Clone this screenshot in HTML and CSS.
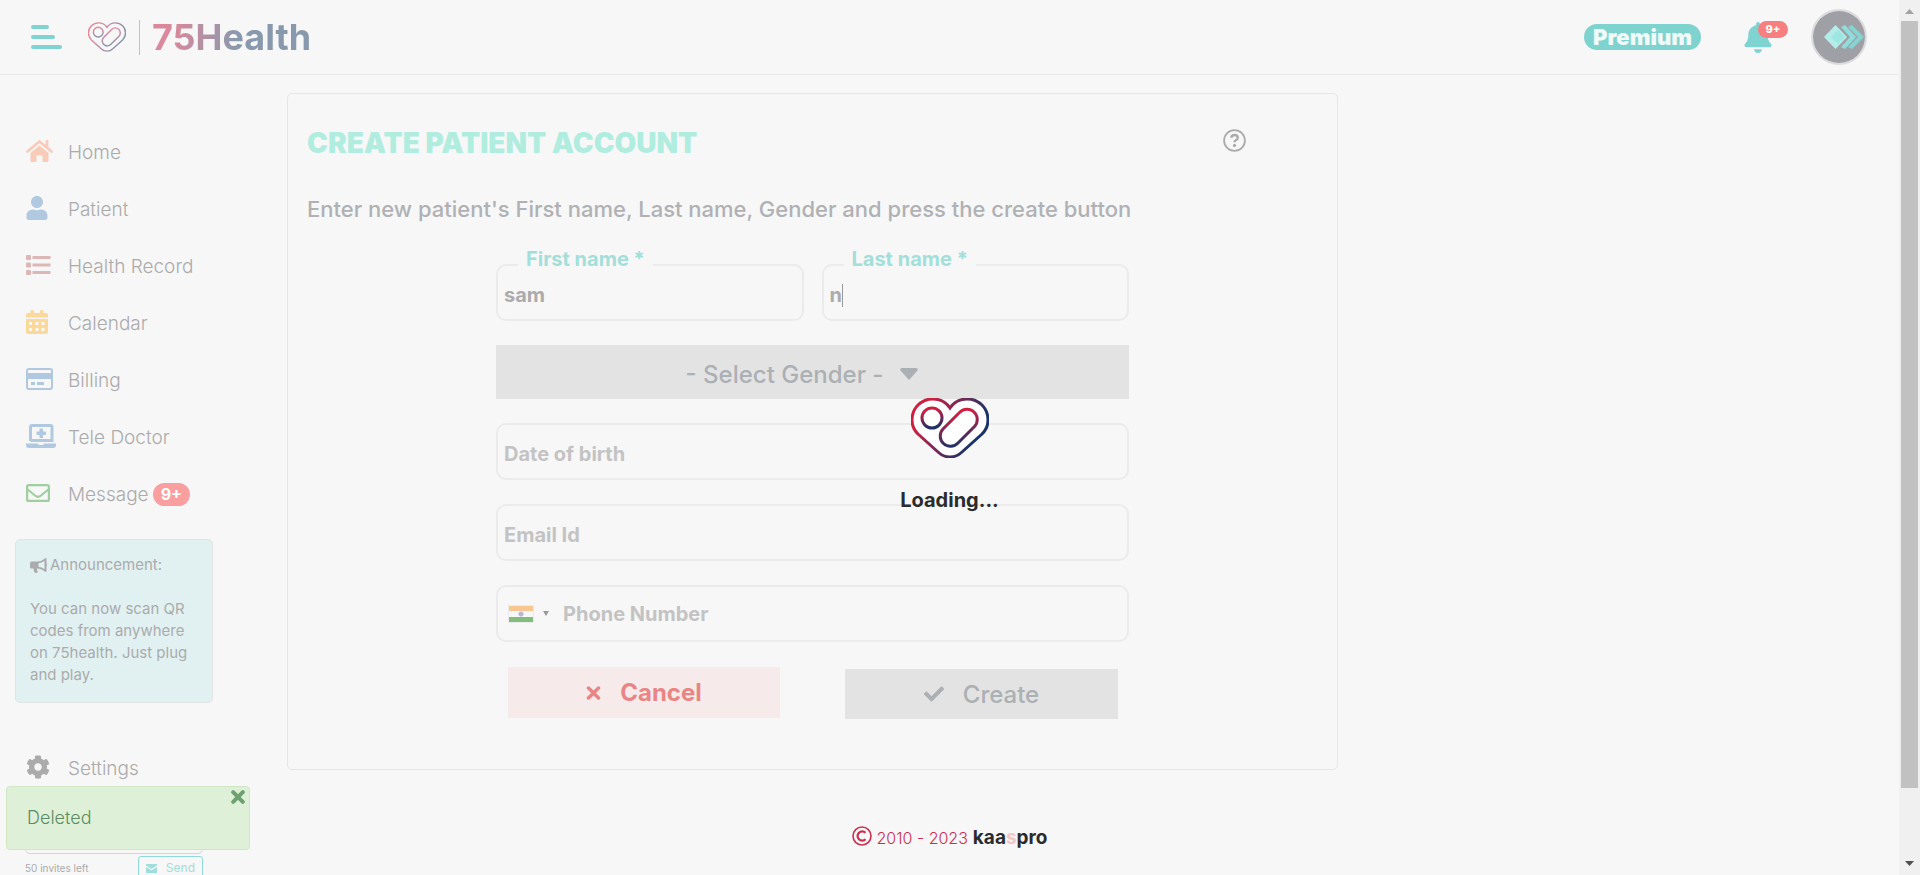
FILE: index.html
```html
<!DOCTYPE html>
<html lang="en">
<head>
<meta charset="utf-8">
<title>75Health - Create Patient Account</title>
<link rel="stylesheet" href="styles.css">
</head>
<body>
<svg class="defs" aria-hidden="true">
  <defs>
    <linearGradient id="g-heart" x1="0" y1="0.3" x2="1" y2="0.7"><stop offset="0.1" stop-color="#cf1f40"/><stop offset="0.85" stop-color="#17336a"/></linearGradient>
    <linearGradient id="g-drop" x1="0.4" y1="0" x2="0.6" y2="1"><stop offset="0.1" stop-color="#cf1f40"/><stop offset="1" stop-color="#17336a"/></linearGradient>
    <symbol id="heart" viewBox="0 0 78 60">
      <path d="M39 10C35 4 29 1 22 1C10 1 1 10 1 22C1 27 3 32 7 36L27 54Q32 59 39 59Q46 59 51 54L71 36C75 32 77 27 77 22C77 10 68 1 56 1C49 1 43 4 39 10Z" stroke="url(#g-heart)"/>
      <circle cx="21" cy="20" r="10" stroke="url(#g-drop)"/>
      <path d="M48.500 14.500A10 10 0 0 1 63.500 28.500L47 45A10 10 0 0 1 32 31Z" stroke="url(#g-drop)"/>
    </symbol>
  </defs>
</svg>
<div class="window">
  <div class="page">
    <header class="topbar">
      <button class="menu" aria-label="Menu"><span></span><span></span><span></span></button>
      <a class="brand" href="#"><svg class="brand-mark"><use href="#heart"/></svg><span class="brand-name">75Health</span></a>
      <a class="premium" href="#">Premium</a>
      <button class="bell" aria-label="Notifications">
        <svg viewBox="0 0 448 512"><path d="M224 512c35.320 0 63.970-28.650 63.970-64H160.030c0 35.350 28.650 64 63.970 64zm215.390-149.710c-19.320-20.760-55.470-51.990-55.470-154.290 0-77.700-54.480-139.900-127.940-155.160V32c0-17.670-14.320-32-31.980-32s-31.980 14.330-31.980 32v20.840C118.560 68.100 64.080 130.300 64.080 208c0 102.300-36.150 133.530-55.470 154.290-6 6.450-8.660 14.160-8.610 21.710.11 16.400 12.980 32 32.100 32h383.800c19.120 0 32-15.600 32.100-32 .05-7.550-2.610-15.270-8.610-21.710z"/></svg>
        <span class="bell-count">9+</span>
      </button>
      <button class="avatar" aria-label="Account">
        <svg viewBox="0 0 52 52"><circle cx="26" cy="26" r="26" fill="#9fa0a5"/><g fill="#86d3d1"><path d="M35 16 39 14 51 26 39 38 35 36 45 26Z"/><path d="M28 16 32 14 43 26 32 38 28 36 37 26Z" fill="#8fdcda"/></g><path d="M22.500 14 34 26 22.500 38 11 26Z" fill="#b4ece9"/><path d="M25 19 32 26 25 33 18 26Z" fill="#9ee6e2"/></svg>
      </button>
    </header>

    <nav class="sidebar">
      <ul class="nav">
        <li><a href="#"><svg class="home" width="27" height="22" viewBox="0 0 27 22"><path d="M1.500 11.500 13.500 1.500 25.500 11.500M21 1V7" fill="none" stroke="currentColor" stroke-width="2.800" stroke-linecap="round" stroke-linejoin="round"/><path d="M13.500 5.500 22.500 13V21Q22.500 22 21.500 22H16.500V15.500H10.500V22H5.500Q4.500 22 4.500 21V13Z" fill="currentColor"/></svg>Home</a></li>
        <li><a href="#"><svg class="blue" width="22" height="24" viewBox="0 0 448 512"><path fill="currentColor" d="M224 256c70.700 0 128-57.300 128-128S294.700 0 224 0 96 57.300 96 128s57.300 128 128 128zm89.600 32h-16.700c-22.200 10.200-46.900 16-72.900 16s-50.600-5.800-72.900-16h-16.700C60.200 288 0 348.200 0 422.400V464c0 26.500 21.500 48 48 48h352c26.500 0 48-21.500 48-48v-41.600c0-74.200-60.200-134.400-134.400-134.400z"/></svg>Patient</a></li>
        <li><a href="#"><svg class="record" width="25" height="20" viewBox="0 0 25 20"><g fill="currentColor"><rect width="5" height="5" rx="1"/><rect y="7.500" width="5" height="5" rx="1"/><rect y="15" width="5" height="5" rx="1"/><rect x="6.500" y="1" width="18" height="3"/><rect x="6.500" y="8.500" width="18" height="3"/><rect x="6.500" y="16" width="18" height="3"/></g></svg>Health Record</a></li>
        <li><a href="#"><svg class="calendar" width="22" height="24" viewBox="0 0 22 24"><path fill="currentColor" fill-rule="evenodd" d="M4.500 3V1q0-1 1-1h1.500q1 0 1 1v2h6V1q0-1 1-1h1.500q1 0 1 1v2H20q2 0 2 2v2.500H0V5q0-2 2-2zM0 9h22v13q0 2-2 2H2q-2 0-2-2zM3 12v3h3v-3zM9.500 12v3h3v-3zM15.500 12v3h3v-3zM3 18v3h3v-3zM9.500 18v3h3v-3zM15.500 18v3h3v-3z"/></svg>Calendar</a></li>
        <li><a href="#"><svg class="blue" width="27" height="22" viewBox="0 0 27 22"><rect x="1" y="1" width="25" height="20" rx="2" fill="none" stroke="currentColor" stroke-width="2"/><path fill="currentColor" d="M1 5h25v6H1zM5 14h4v3H5zM11 14h7v3h-7z"/></svg>Billing</a></li>
        <li><a href="#"><svg class="blue" width="30" height="24" viewBox="0 0 30 24"><path d="M4.500 17V3q0-1.500 1.500-1.500H24.500q1.500 0 1.500 1.500V16.500H4.500" fill="none" stroke="currentColor" stroke-width="3"/><path fill="currentColor" d="M13.500 4.500h3.500v3h3v3.500h-3v3h-3.500v-3h-3V7.500h3zM0 19.500h12q.5 1.500 1.500 1.500h3q1 0 1.500-1.500H30V21q0 3-3 3H3q-3 0-3-3z"/></svg>Tele Doctor</a></li>
        <li><a href="#"><svg class="message" width="24" height="18" viewBox="0 0 24 18"><g fill="none" stroke="currentColor" stroke-width="2.200"><rect x="1.100" y="1.100" width="21.800" height="15.800" rx="1.500"/><path d="M1 5 9 11.500Q12 14 15 11.500L23 5"/></g></svg>Message<span class="count">9+</span></a></li>
      </ul>
      <section class="announcement">
        <h2><svg width="17" height="15" viewBox="0 0 17 15"><path fill="currentColor" fill-rule="evenodd" d="M15.500 0q1 0 1 1v4.500q1 1 0 2.500v5q0 1-1 1-4-3.500-8.500-3.500 0 2.500 1 3.500-.5 1-3 1-1.500-1.500-1.500-4.500H1.500Q0 10.500 0 9V5q0-1.500 1.500-1.500H7Q11.500 3.500 15.500 0zM14.500 3Q11.500 5 8.500 5.300V8.700q3 .3 6 2.300z"/></svg>Announcement:</h2>
        <p>You can now scan QR codes from anywhere on 75health. Just plug and play.</p>
      </section>
      <ul class="nav">
        <li><a href="#"><svg class="gear" width="24" height="24" viewBox="0 0 512 512"><path fill="currentColor" d="M487.400 315.700l-42.600-24.600c4.300-23.200 4.300-47 0-70.200l42.600-24.600c4.900-2.800 7.100-8.600 5.500-14-11.100-35.600-30-67.800-54.700-94.600-3.800-4.100-10-5.100-14.800-2.300L380.800 110c-17.900-15.400-38.500-27.300-60.800-35.100V25.800c0-5.600-3.900-10.500-9.400-11.700-36.700-8.200-74.300-7.800-109.200 0-5.500 1.200-9.400 6.100-9.400 11.700V75c-22.200 7.900-42.800 19.800-60.800 35.100L88.700 85.500c-4.900-2.800-11-1.900-14.800 2.300-24.700 26.700-43.600 58.900-54.700 94.600-1.700 5.400.6 11.200 5.500 14L67.300 221c-4.300 23.200-4.300 47 0 70.200l-42.600 24.600c-4.900 2.800-7.100 8.600-5.500 14 11.100 35.600 30 67.800 54.700 94.600 3.800 4.100 10 5.100 14.800 2.300l42.600-24.600c17.900 15.400 38.500 27.300 60.800 35.100v49.200c0 5.600 3.900 10.500 9.400 11.700 36.700 8.200 74.300 7.800 109.200 0 5.500-1.200 9.400-6.100 9.400-11.700v-49.200c22.200-7.900 42.800-19.800 60.800-35.100l42.600 24.600c4.900 2.800 11 1.900 14.800-2.300 24.700-26.700 43.600-58.900 54.700-94.600 1.500-5.500-.7-11.300-5.600-14.100zM256 336c-44.100 0-80-35.900-80-80s35.900-80 80-80 80 35.900 80 80-35.900 80-80 80z"/></svg>Settings</a></li>
      </ul>
      <form class="invite">
        <input type="email" aria-label="Invite email">
        <div class="invite-row">
          <span>50 invites left</span>
          <button type="button"><svg width="11" height="9" viewBox="0 0 11 9"><path fill="currentColor" d="M0 0H11V1.500L5.500 5 0 1.500ZM0 3 5.500 6.300 11 3V9H0Z"/></svg>Send</button>
        </div>
      </form>
    </nav>

    <main class="card">
      <div class="card-head">
        <h1>CREATE PATIENT ACCOUNT</h1>
        <button class="help" aria-label="Help"><svg viewBox="0 0 23 23"><circle cx="11.500" cy="11.500" r="10.400" fill="none" stroke="currentColor" stroke-width="1.800"/><path d="M8.300 8.800Q8.500 6 11.500 6Q14.800 6 14.800 8.700Q14.800 10.400 12.800 11.200Q11.500 11.800 11.500 13.300" fill="none" stroke="currentColor" stroke-width="2.300"/><circle cx="11.500" cy="16.400" r="1.600" fill="currentColor"/></svg></button>
      </div>
      <p class="intro">Enter new patient's First name, Last name, Gender and press the create button</p>
      <form class="form">
        <div class="names">
          <div class="field"><label for="first">First name *</label><input id="first" type="text" value="sam"></div>
          <div class="field"><label for="last">Last name *</label><input id="last" type="text" value="n"><span class="caret"></span></div>
        </div>
        <div class="gender">
          <select aria-label="Gender"><option>- Select Gender -</option></select>
          <svg viewBox="0 0 18 12"><path fill="currentColor" d="M1.500 0H16.500Q18.500 1 17.500 2.500L10 11Q9 12 8 11L.5 2.500Q-.5 1 1.500 0Z"/></svg>
        </div>
        <input type="text" placeholder="Date of birth" aria-label="Date of birth">
        <input type="email" placeholder="Email Id" aria-label="Email Id">
        <div class="phone">
          <button type="button" class="country" aria-label="India"><span class="flag"></span><svg width="6" height="5" viewBox="0 0 6 5"><path fill="currentColor" d="M0 0H6L3 5Z"/></svg></button>
          <input type="tel" placeholder="Phone Number" aria-label="Phone Number">
        </div>
        <div class="actions">
          <button type="button" class="cancel"><svg width="15" height="14" viewBox="0 0 15 14"><path d="M2.500 2 12.500 12M12.500 2 2.500 12" stroke="currentColor" stroke-width="3.500" stroke-linecap="round"/></svg>Cancel</button>
          <button type="button" class="create"><svg width="20" height="20" viewBox="0 0 512 512"><path fill="currentColor" d="M173.898 439.404l-166.400-166.400c-9.997-9.997-9.997-26.206 0-36.204l36.203-36.204c9.997-9.998 26.207-9.998 36.204 0L192 312.690 432.095 72.596c9.997-9.997 26.207-9.997 36.204 0l36.203 36.204c9.997 9.997 9.997 26.206 0 36.204l-294.400 294.401c-9.998 9.997-26.207 9.997-36.204-.001z"/></svg>Create</button>
        </div>
      </form>
    </main>

    <footer class="footer"><svg width="20" height="20" viewBox="0 0 20 20"><g fill="none" stroke="currentColor" stroke-width="1.600"><circle cx="10" cy="10" r="9"/><path d="M13.500 6.800A4.600 4.600 0 1 0 13.500 13.200" stroke-width="2.200"/></g></svg><span>2010 - 2023</span><a href="#">kaa<i>s</i>pro</a></footer>

    <div class="loading" role="status"><svg><use href="#heart"/></svg><p>Loading...</p></div>
    <div class="toast" role="alert">Deleted<button aria-label="Close"><svg width="14" height="14" viewBox="0 0 14 14"><path d="M2.200 2.200 11.800 11.800M11.800 2.200 2.200 11.800" stroke="currentColor" stroke-width="4" stroke-linecap="round"/></svg></button></div>
  </div>
  <div class="scrollbar" aria-hidden="true">
    <svg class="up" width="9" height="5" viewBox="0 0 9 5"><path d="M4.500 0 9 5H0Z"/></svg>
    <div class="thumb"></div>
    <svg width="9" height="5" viewBox="0 0 9 5"><path d="M0 0H9L4.500 5Z"/></svg>
  </div>
</div>
</body>
</html>
```
FILE: styles.css
```css
* { box-sizing: border-box; }
body { margin: 0; background: #f7f7f7; color: #ababab; font-family: Inter, "Liberation Sans", sans-serif; font-size: 18px; }
button { border: 0; padding: 0; background: none; color: inherit; font: inherit; }
input, select { font: inherit; color: inherit; outline: 0; }
a { color: inherit; text-decoration: none; }
ul, h1, h2, p { margin: 0; padding: 0; list-style: none; }
svg { flex: none; }
.defs { position: absolute; width: 0; height: 0; }

.window { display: grid; grid-template-columns: minmax(0, 1fr) 21px; height: 100vh; overflow: hidden; }
.page { position: relative; display: grid; grid-template-columns: 287px minmax(0, 1fr); grid-template-rows: auto auto 1fr; overflow: hidden; }

/* Top bar */
.topbar { grid-column: 1 / -1; grid-row: 1; display: flex; align-items: center; height: 75px; padding: 0 32px 0 31px; border-bottom: 1px solid #e9e9e9; }
.menu { display: grid; gap: 6px; width: 31px; margin-right: 26px; }
.menu span { height: 4px; border-radius: 2px; background: #7fd3d0; }
.menu span:nth-child(1) { width: 18px; }
.menu span:nth-child(2) { width: 24px; }
.brand { display: flex; align-items: center; margin-right: auto; }
.brand-mark { width: 38px; height: 30px; fill: none; stroke-width: 3px; opacity: 0.5; }
.brand-name { margin-left: 13px; padding-left: 12px; border-left: 1px solid #c9bcc8; font-size: 36px; font-weight: 700; line-height: 35px; color: transparent; background: linear-gradient(100deg, #d9899b 20%, #8899ae 58%); background-clip: text; -webkit-background-clip: text; }
.premium { margin-right: 43px; padding: 0 9px; border-radius: 13px; background: #7fd3ce; color: #f0faf9; font-size: 22px; font-weight: 900; line-height: 26px; }
.bell { position: relative; width: 28px; height: 31px; margin-right: 39px; }
.bell svg { display: block; width: 28px; height: 31px; fill: #7fd3d0; }
.bell-count { position: absolute; left: 14px; top: -1px; width: 30px; border-radius: 9px; background: #f77f7f; color: #fff; font-size: 11px; font-weight: 800; line-height: 17px; }
.avatar { width: 56px; height: 56px; border: 2px solid #dcdcdf; border-radius: 50%; }
.avatar svg { display: block; }

/* Sidebar */
.sidebar { grid-column: 1; grid-row: 2 / 4; padding: 49px 0 0 15px; }
.nav { padding-left: 11px; font-size: 19px; font-weight: 300; }
.nav a { display: flex; align-items: center; height: 57px; }
.nav svg { margin-bottom: 4px; }
.nav svg[width="22"] { margin-right: 20px; }
.nav svg[width="24"] { margin-right: 18px; }
.nav svg[width="25"] { margin-right: 17px; }
.nav svg[width="27"] { margin-right: 15px; }
.nav svg[width="30"] { margin-right: 12px; }
.home { color: #f9cbb9; }
.blue { color: #b1c9e0; }
.record { color: #ddb6b6; }
.calendar { color: #fad99a; }
.message { color: #9fcf9f; }
.count { margin-left: 4px; padding: 0 8px; border-radius: 12px; background: #f99f9f; color: #fff; font-size: 16px; font-weight: 700; line-height: 23px; }
.announcement { width: 198px; margin: 16px 0 37px; padding: 14px 12px 16px 14px; border: 1px solid #e0e4e4; border-radius: 5px; background: #e1f1f2; font-size: 15px; line-height: 22px; }
.announcement h2 { display: flex; align-items: center; gap: 3px; margin-bottom: 22px; font-size: 15px; font-weight: 400; }
.invite { width: 188px; padding-left: 10px; }
.invite input { display: block; width: 100%; height: 47px; margin: 10px 0 2px; border: 1px solid #d5d5d5; border-radius: 5px; background: none; }
.invite-row { display: flex; justify-content: space-between; font-size: 10px; line-height: 24px; }
.invite button { display: flex; align-items: center; gap: 9px; height: 24px; padding: 0 7px; border: 1px solid #8fd9d6; border-radius: 3px; color: #9fdeda; font-size: 12px; }

/* Patient card */
.card { grid-column: 2; grid-row: 2; width: 100%; max-width: 1051px; margin-top: 18px; padding: 34px 19px 50px; border: 1px solid #e6e6e6; border-radius: 5px; }
.card-head { display: flex; justify-content: space-between; padding-right: 72px; }
.card-head h1 { color: #b0eddf; font-size: 28px; font-weight: 900; line-height: 30px; }
.help { width: 23px; height: 23px; margin-top: 1px; }
.help svg { display: block; }
.intro { margin: 38px 0 42px; color: #afb1b4; font-size: 22px; font-weight: 500; line-height: 26px; }
.form { display: grid; gap: 24px; max-width: 633px; margin: 0 auto; font-size: 20px; font-weight: 700; }
.form > input, .field input, .phone { width: 100%; height: 57px; border: 2px solid #ebebeb; border-radius: 10px; background: none; }
.form > input, .field input { padding: 5px 6px 0; }
.form input::placeholder { color: #c3c3c3; opacity: 1; }
.names { display: grid; grid-template-columns: 1fr 1fr; gap: 18px; }
.field { position: relative; }
.field label { position: absolute; left: 22px; top: -16px; padding: 0 8px; background: #f7f7f7; color: #a3dfda; line-height: 22px; }
.caret { position: absolute; left: 20px; top: 20px; width: 1px; height: 23px; background: #999; }
.gender { position: relative; color: #abb0b4; }
.gender select { display: block; width: 100%; height: 54px; padding: 4px 56px 0 0; border: 0; border-radius: 0; background: #e3e3e3; appearance: none; font-size: 24px; font-weight: 500; text-align: center; text-align-last: center; }
.gender svg { position: absolute; left: calc(50% + 87px); top: 23px; width: 18px; height: 12px; }
.phone { display: flex; padding-left: 10px; }
.country { display: flex; align-items: center; gap: 9px; margin-right: 14px; color: #999; }
.flag { width: 26px; height: 18px; border: 1px solid #ececec; background: radial-gradient(circle, #b9b4dc 2px, transparent 3px), linear-gradient(#f9c590 33%, #f7f7f7 33% 66%, #83bd7d 66%); }
.phone input { flex: 1; min-width: 0; padding: 0; border: 0; background: none; }
.actions { display: grid; grid-template-columns: 272px 273px; justify-content: space-between; align-items: end; padding: 1px 11px 0 12px; font-size: 24px; }
.actions button { display: flex; align-items: center; justify-content: center; gap: 19px; }
.actions .cancel { height: 51px; margin-bottom: 1px; background: #f6ebea; color: #e98585; }
.actions .create { height: 50px; background: #e3e3e3; color: #abb0b4; font-weight: 500; }

/* Footer */
.footer { grid-column: 1 / -1; grid-row: 3; display: flex; align-items: start; justify-content: center; gap: 5px; margin-top: 56px; color: #c7304f; font-size: 16px; font-weight: 300; line-height: 24px; }
.footer a { color: #2b2b2d; font-size: 19px; font-weight: 700; }
.footer i { color: #f6c5c5; font-style: normal; }

/* Overlays */
.loading { position: absolute; left: 50%; top: 398px; width: 120px; margin-left: -60px; text-align: center; color: #2b2b2b; font-size: 20px; font-weight: 700; line-height: 24px; }
.loading svg { display: block; width: 78px; height: 60px; margin: 0 auto 30px; fill: #fff; stroke-width: 3px; }
.toast { position: absolute; left: 6px; bottom: 25px; width: 244px; padding: 20px; border: 1px solid #d0e7c4; border-radius: 4px; background: #dff0d8; color: #5b8d61; font-weight: 300; line-height: 22px; }
.toast button { position: absolute; top: 3px; right: 4px; color: #6fa070; }
.toast svg { display: block; }

/* Scroll bar */
.scrollbar { display: flex; flex-direction: column; align-items: center; justify-content: space-between; padding: 9px 0; background: #f0f0f0; fill: #505050; }
.scrollbar .up { fill: #a3a3a3; }
.thumb { width: 17px; flex: 1; margin: 7px 0 73px; background: #c1c1c1; }
```
